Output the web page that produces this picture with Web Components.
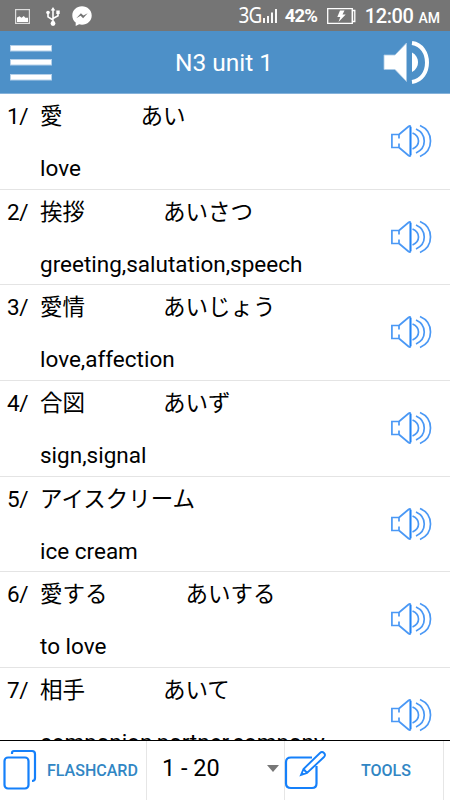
<!DOCTYPE html>
<html lang="en">
<head>
  <meta charset="UTF-8">
  <meta name="viewport" content="width=device-width, initial-scale=1.0">
  <title>N3 unit 1</title>
  <style>
    body {
      margin: 0;
      background: #ffffff;
      font-family: Roboto, "Noto Sans CJK JP", sans-serif;
    }
  </style>
</head>
<body>
  <vocab-app>
    <status-bar slot="status" network="3G" battery="42%" time="12:00" period="AM"></status-bar>
    <app-header slot="header">N3 unit 1</app-header>
    <word-row number="1" word="愛" reading="あい">love</word-row>
    <word-row number="2" word="挨拶" reading="あいさつ">greeting,salutation,speech</word-row>
    <word-row number="3" word="愛情" reading="あいじょう">love,affection</word-row>
    <word-row number="4" word="合図" reading="あいず">sign,signal</word-row>
    <word-row number="5" word="アイスクリーム" reading="">ice cream</word-row>
    <word-row number="6" word="愛する" reading="あいする">to love</word-row>
    <word-row number="7" word="相手" reading="あいて">companion,partner,company</word-row>
    <bottom-bar slot="footer" range="1 - 20"></bottom-bar>
  </vocab-app>

  <script>
    class VocabApp extends HTMLElement {
      constructor() {
        super();
        this.attachShadow({ mode: 'open' });
        this.shadowRoot.innerHTML = `
          <style>
            :host {
              display: flex;
              flex-direction: column;
              width: 450px;
              height: 800px;
              overflow: hidden;
            }
            .list {
              flex: 1;
              min-height: 0;
              overflow: hidden;
            }
          </style>
          <slot name="status"></slot>
          <slot name="header"></slot>
          <main class="list"><slot></slot></main>
          <slot name="footer"></slot>
        `;
      }
    }
    customElements.define('vocab-app', VocabApp);

    class StatusBar extends HTMLElement {
      constructor() {
        super();
        this.attachShadow({ mode: 'open' });
        this.shadowRoot.innerHTML = `
          <style>
            :host {
              display: flex;
              flex: none;
              align-items: center;
              justify-content: space-between;
              box-sizing: border-box;
              height: 31px;
              padding: 1px 10px 0 15px;
              background: #757575;
              color: #ffffff;
              line-height: 30px;
              white-space: nowrap;
            }
            div {
              display: flex;
              align-items: center;
            }
            svg {
              display: block;
              flex: none;
            }
            .usb { margin: 0 12px 0 16px; }
            .network {
              margin-top: -2px;
              font-family: "Noto Sans", sans-serif;
              font-size: 21px;
              letter-spacing: -1px;
              transform: scaleX(0.9);
              transform-origin: right;
            }
            .signal { margin: -3px 8px 0 1px; }
            .battery {
              width: 33px;
              font-size: 18.5px;
              font-weight: 700;
              letter-spacing: -0.8px;
            }
            .cell { margin: 0 9px; }
            .time {
              font-size: 20px;
              font-weight: 500;
              letter-spacing: -0.4px;
            }
            .period {
              font-size: 14px;
              font-weight: 500;
              margin: 4px 0 0 5px;
            }
          </style>
          <div>
            <svg width="15" height="15" viewBox="0 0 15 15">
              <rect x=".6" y=".6" width="13.8" height="13.8" fill="none" stroke="#ddd" stroke-width="1.2"/>
              <path d="M2 13V8.500l2.500-1.300 2 1.600L8.800 7l1.500 1.800H13V13z" fill="#fff"/>
            </svg>
            <svg class="usb" width="14" height="19" viewBox="0 0 14 19">
              <path d="M7 2.500V16M7 13L2 9.800V6M7 11.500l5-2.700V5.500" fill="none" stroke="#fff" stroke-width="1.600"/>
              <path d="M7 0l2.300 3.600H4.700zM10.300 3.500h3.400v3.400h-3.400z" fill="#fff"/>
              <circle cx="2" cy="5.500" r="1.800" fill="#fff"/>
              <circle cx="7" cy="16.500" r="2.400" fill="#fff"/>
            </svg>
            <svg width="20" height="20" viewBox="0 0 20 20">
              <path d="M10 .3c5.500 0 9.700 4 9.700 9.200s-4.200 9.200-9.700 9.200c-1 0-2-.1-2.900-.4L3.700 20v-3.400C1.500 14.900.3 12.400.3 9.500.3 4.300 4.500.3 10 .3z" fill="#fff"/>
              <path d="M4.300 12.200l4.600-5 2.500 2.300 4.300-2.300-4.600 5-2.500-2.400z" fill="#757575"/>
            </svg>
          </div>
          <div>
            <span class="network">${this.getAttribute('network')}</span>
            <svg class="signal" width="14" height="16" viewBox="0 0 14 16">
              <path d="M1 11v5M5 9v7M9 5.500V16M13 2v14" stroke="#fff" stroke-width="1.900"/>
            </svg>
            <span class="battery">${this.getAttribute('battery')}</span>
            <svg class="cell" width="29" height="16" viewBox="0 0 29 16">
              <path d="M.7.700h24.600v14.600H.7z" fill="none" stroke="#fff" stroke-width="1.300"/>
              <path d="M25.500 2.500h2.300v11h-2.300z" fill="none" stroke="#fff" stroke-width="1.300"/>
              <path d="M13 2.500h4.500l-2 4h3.200L11.500 14l1.800-5h-3z" fill="#fff"/>
            </svg>
            <span class="time">${this.getAttribute('time')}</span>
            <span class="period">${this.getAttribute('period')}</span>
          </div>
        `;
      }
    }
    customElements.define('status-bar', StatusBar);

    class AppHeader extends HTMLElement {
      constructor() {
        super();
        this.attachShadow({ mode: 'open' });
        this.shadowRoot.innerHTML = `
          <style>
            :host {
              display: grid;
              grid-template-columns: 52px 1fr 48px;
              align-items: center;
              flex: none;
              box-sizing: border-box;
              height: 63px;
              padding: 0 20px 0 10px;
              border-bottom: 1px solid #85b2da;
              background: #4d90c8;
              color: #ffffff;
            }
            h1 {
              margin: 2px 0 0 4px;
              font-size: 24.5px;
              font-weight: 400;
              line-height: 30px;
              text-align: center;
            }
            svg {
              display: block;
            }
            .menu { margin-top: 1px; }
          </style>
          <svg class="menu" width="42" height="36" viewBox="0 0 42 36">
            <path d="M0 0h42v6.500H0zM0 14h42v6.500H0zM0 29h42v6.500H0z" fill="#b5d0e9"/>
            <path d="M1 1h40v4.500H1zM1 15h40v4.500H1zM1 30h40v4.500H1z" fill="#fff"/>
          </svg>
          <h1><slot></slot></h1>
          <svg width="48" height="44" viewBox="0 0 48 44">
            <path d="M2 15h11L24.500 3v38.500L13 29.500H2z" fill="#fff" stroke="#a9c9e5" stroke-width=".8"/>
            <path d="M30 12.500c8 4 8 15.500 0 19.500z" fill="#fff"/>
            <path d="M30 3c20 2.500 20 36.500 0 39" fill="none" stroke="#fff" stroke-width="4"/>
          </svg>
        `;
      }
    }
    customElements.define('app-header', AppHeader);

    class WordRow extends HTMLElement {
      constructor() {
        super();
        this.attachShadow({ mode: 'open' });
        this.shadowRoot.innerHTML = `
          <style>
            :host {
              display: grid;
              grid-template-columns: 33px 1fr 42px;
              box-sizing: border-box;
              height: 95.650px;
              padding: 4px 18px 0 7px;
              border-bottom: 1px solid #e4e4e4;
              color: #000000;
              font-size: 22.5px;
              line-height: 36px;
              white-space: nowrap;
            }
            .number { letter-spacing: -0.3px; }
            .japanese {
              display: flex;
              height: 36px;
            }
            .reading { margin-left: 78px; }
            .meaning {
              height: 36px;
              margin-top: 16px;
            }
            svg {
              display: block;
              margin-top: 26px;
            }
          </style>
          <span class="number">${this.getAttribute('number')}/</span>
          <div>
            <div class="japanese">
              <span>${this.getAttribute('word')}</span>
              <span class="reading">${this.getAttribute('reading')}</span>
            </div>
            <div class="meaning"><slot></slot></div>
          </div>
          <svg width="42" height="34" viewBox="0 0 42 34" fill="none" stroke="#4a98f5" stroke-width="1.700">
            <path d="M9 14.500V10.500H1.900v13H9V19.500M9 10.500L18.500 2.500q2-1.500 2 .5v28q0 2-2 .5L9 23.500"/>
            <path d="M20.500 3v28" stroke="#2284f5"/>
            <path d="M22.500 9c8 3.500 8 12.500 0 16M26 5c11 5 11 19 0 24M30 1.500c14 6 14 25 0 31"/>
          </svg>
        `;
      }
    }
    customElements.define('word-row', WordRow);

    class BottomBar extends HTMLElement {
      constructor() {
        super();
        this.attachShadow({ mode: 'open' });
        this.shadowRoot.innerHTML = `
          <style>
            :host {
              display: grid;
              grid-template-columns: 147px 138px 159px 1fr;
              flex: none;
              box-sizing: border-box;
              height: 60px;
              border-top: 1px solid #000000;
              background: #ffffff;
              white-space: nowrap;
            }
            div {
              display: flex;
              align-items: center;
              border-right: 1px solid #e6e6e6;
            }
            svg {
              display: block;
              flex: none;
            }
            .button {
              color: #3186c4;
              font-size: 16px;
              font-weight: 500;
            }
            .flashcard { padding-left: 3px; }
            .flashcard svg { margin-bottom: 1px; }
            .flashcard span { margin-left: 10px; }
            .range {
              padding: 0 5px 5px 15px;
              justify-content: space-between;
              color: #000000;
              font-size: 23.500px;
            }
            .tools svg { margin: 0 0 1px -1px; }
            .tools span { margin-left: 35px; }
          </style>
          <div class="button flashcard">
            <svg width="34" height="42" viewBox="0 0 34 42" fill="none" stroke="#1580fa" stroke-width="2.200">
              <rect x="1.500" y="8.500" width="24" height="31" rx="3.500"/>
              <path d="M9 5V4q0-2 2-2h18q3 0 3 3v24q0 3-3 3"/>
            </svg>
            <span>FLASHCARD</span>
          </div>
          <div class="range">
            <span>${this.getAttribute('range')}</span>
            <svg width="12" height="7" viewBox="0 0 12 7"><path d="M0 0h12L6 7z" fill="#777"/></svg>
          </div>
          <div class="button tools">
            <svg width="42" height="40" viewBox="0 0 42 40" fill="none" stroke="#1580fa" stroke-width="2.200">
              <path d="M28 7.500H7Q2 7.500 2 12v21.500Q2 38 7 38h21q4.500 0 4.500-4.500V16"/>
              <path d="M17 25l2.500-6L36 3q2-2 4 0t0 4L23 23zM19.500 19l3.500 4" stroke-width="1.900"/>
            </svg>
            <span>TOOLS</span>
          </div>
        `;
      }
    }
    customElements.define('bottom-bar', BottomBar);
  </script>
</body>
</html>
